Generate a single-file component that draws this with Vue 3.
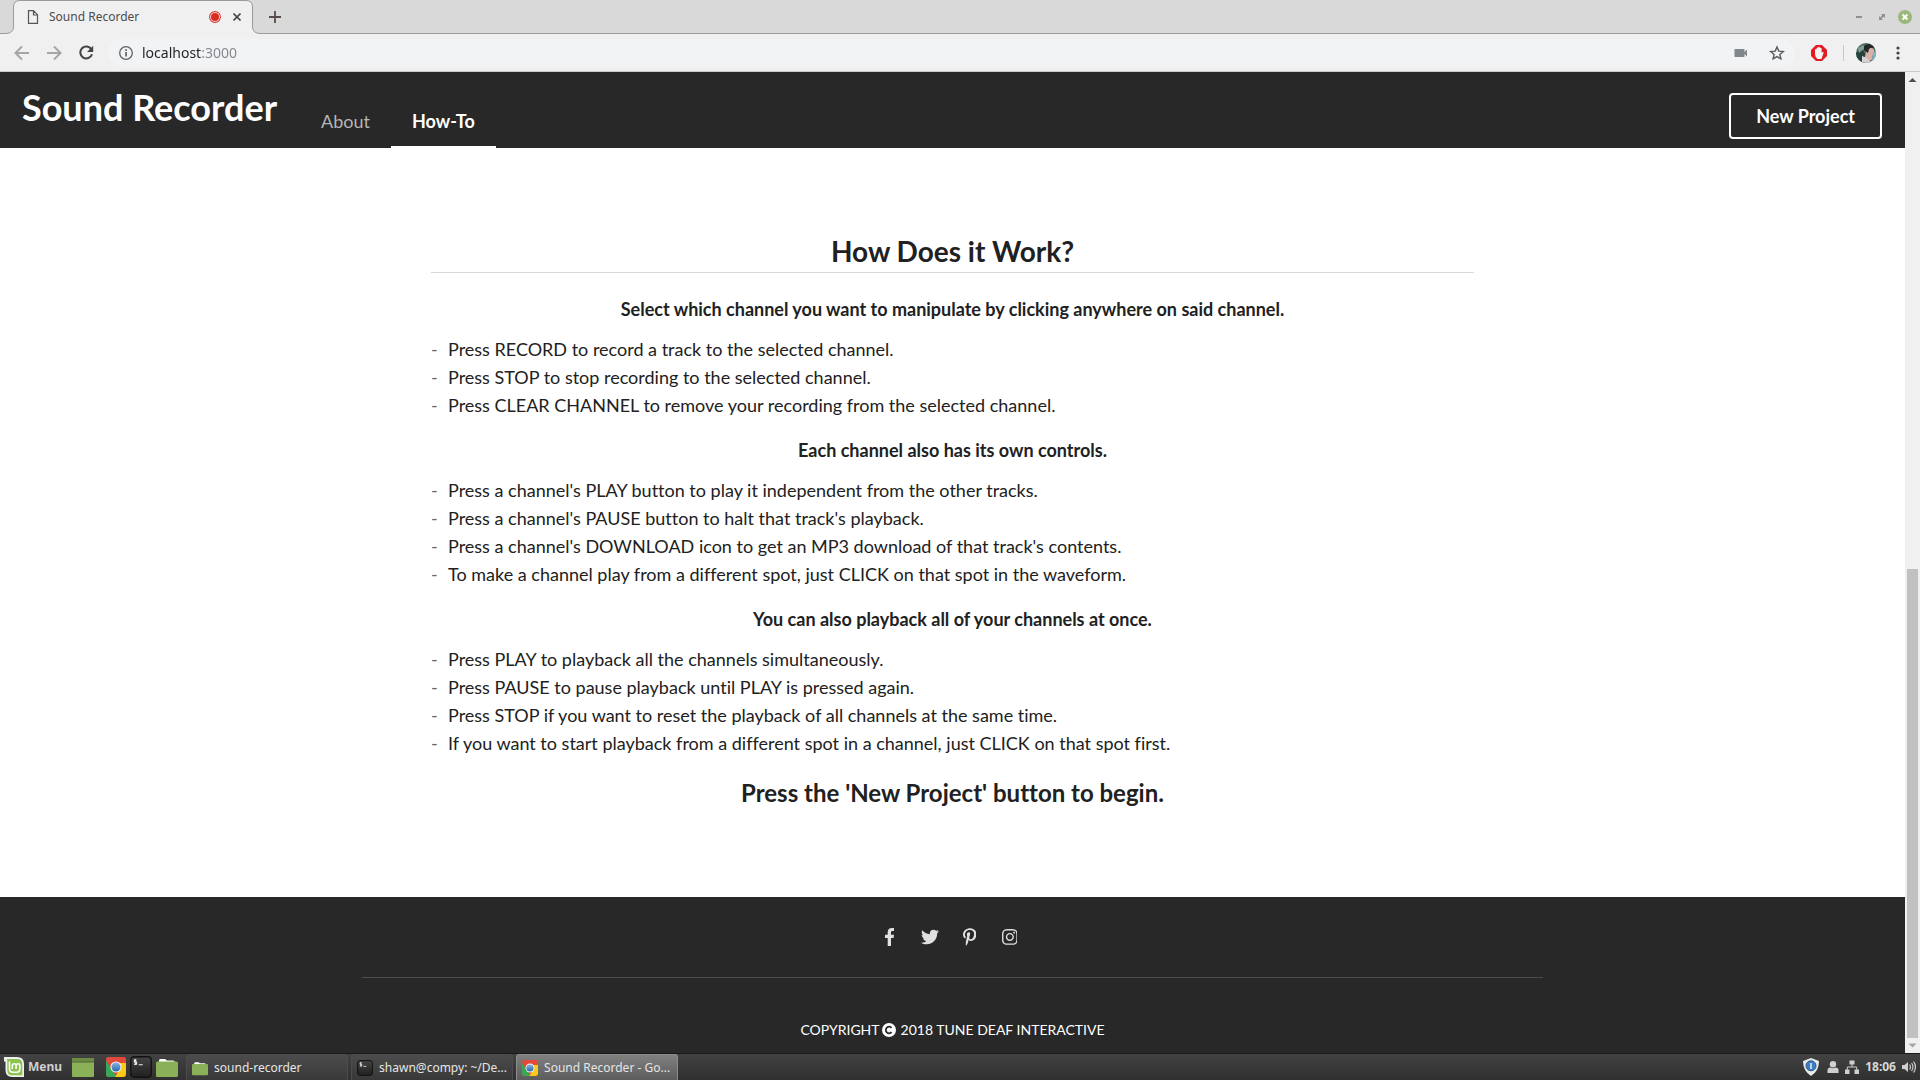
<script setup>
const sections = [
  {
    title: 'Select which channel you want to manipulate by clicking anywhere on said channel.',
    items: [
      'Press RECORD to record a track to the selected channel.',
      'Press STOP to stop recording to the selected channel.',
      'Press CLEAR CHANNEL to remove your recording from the selected channel.',
    ],
  },
  {
    title: 'Each channel also has its own controls.',
    items: [
      "Press a channel's PLAY button to play it independent from the other tracks.",
      "Press a channel's PAUSE button to halt that track's playback.",
      "Press a channel's DOWNLOAD icon to get an MP3 download of that track's contents.",
      'To make a channel play from a different spot, just CLICK on that spot in the waveform.',
    ],
  },
  {
    title: 'You can also playback all of your channels at once.',
    items: [
      'Press PLAY to playback all the channels simultaneously.',
      'Press PAUSE to pause playback until PLAY is pressed again.',
      'Press STOP if you want to reset the playback of all channels at the same time.',
      'If you want to start playback from a different spot in a channel, just CLICK on that spot first.',
    ],
  },
]

const socials = [
  {
    name: 'Facebook',
    box: '0 0 264 512',
    path: 'M76.7 512V283H0v-91h76.7v-71.7C76.7 42.4 124.3 0 193.8 0c33.3 0 61.9 2.5 70.2 3.6V85h-48.2c-37.8 0-45.1 18-45.1 44.3V192H256l-11.7 91h-73.6v229',
  },
  {
    name: 'Twitter',
    box: '0 0 512 512',
    path: 'M459.37 151.716c.325 4.548.325 9.097.325 13.645 0 138.72-105.583 298.558-298.558 298.558-59.452 0-114.68-17.219-161.137-47.106 8.447.974 16.568 1.299 25.34 1.299 49.055 0 94.213-16.568 130.274-44.832-46.132-.975-84.792-31.188-98.112-72.772 6.498.974 12.995 1.624 19.818 1.624 9.421 0 18.843-1.3 27.614-3.573-48.081-9.747-84.143-51.98-84.143-102.985v-1.299c13.969 7.797 30.214 12.67 47.431 13.319-28.264-18.843-46.781-51.005-46.781-87.391 0-19.492 5.197-37.36 14.294-52.954 51.655 63.675 129.3 105.258 216.365 109.807-1.624-7.797-2.599-15.918-2.599-24.04 0-57.828 46.782-104.934 104.934-104.934 30.213 0 57.502 12.67 76.67 33.137 23.715-4.548 46.456-13.32 66.599-25.34-7.798 24.366-24.366 44.833-46.132 57.827 21.117-2.273 41.584-8.122 60.426-16.243-14.292 20.791-32.161 39.308-52.628 54.253z',
  },
  {
    name: 'Pinterest',
    box: '0 0 384 512',
    path: 'M204 6.5C101.4 6.5 0 74.9 0 185.6 0 256 39.6 296 63.6 296c9.9 0 15.6-27.6 15.6-35.4 0-9.3-23.7-29.1-23.7-67.8 0-80.4 61.2-137.4 140.4-137.4 68.1 0 118.5 38.7 118.5 109.8 0 53.1-21.3 152.7-90.3 152.7-24.9 0-46.2-18-46.2-43.8 0-37.8 26.4-74.4 26.4-113.4 0-66.2-93.9-54.2-93.9 25.8 0 16.8 2.1 35.4 9.6 50.7-13.8 59.4-42 147.9-42 209.1 0 18.9 2.7 37.5 4.5 56.4 3.4 3.8 1.7 3.4 6.9 1.5 50.4-69 48.6-82.5 71.4-172.8 12.3 23.4 44.1 36 69.3 36 106.2 0 153.9-103.5 153.9-196.8C384 71.3 298.2 6.5 204 6.5z',
  },
  {
    name: 'Instagram',
    box: '0 0 448 512',
    path: 'M224.1 141c-63.6 0-114.9 51.3-114.9 114.9s51.3 114.9 114.9 114.9S339 319.5 339 255.9 287.7 141 224.1 141zm0 189.6c-41.1 0-74.7-33.5-74.7-74.7s33.5-74.7 74.7-74.7 74.7 33.5 74.7 74.7-33.6 74.7-74.7 74.7zm146.4-194.3c0 14.9-12 26.8-26.8 26.8-14.9 0-26.8-12-26.8-26.8s12-26.8 26.8-26.8 26.8 12 26.8 26.8zm76.1 27.2c-1.7-35.9-9.9-67.7-36.2-93.9-26.2-26.2-58-34.4-93.9-36.2-37-2.1-147.9-2.1-184.9 0-35.8 1.7-67.6 9.9-93.9 36.1s-34.4 58-36.2 93.9c-2.1 37-2.1 147.9 0 184.9 1.7 35.9 9.9 67.7 36.2 93.9s58 34.4 93.9 36.2c37 2.1 147.9 2.1 184.9 0 35.9-1.7 67.7-9.9 93.9-36.2 26.2-26.2 34.4-58 36.2-93.9 2.1-37 2.1-147.8 0-184.8zM398.8 388c-7.8 19.6-22.9 34.7-42.6 42.6-29.5 11.7-99.5 9-132.1 9s-102.7 2.6-132.1-9c-19.6-7.8-34.7-22.9-42.6-42.6-11.7-29.5-9-99.5-9-132.1s-2.6-102.7 9-132.1c7.8-19.6 22.9-34.7 42.6-42.6 29.5-11.7 99.5-9 132.1-9s102.7-2.6 132.1 9c19.6 7.8 34.7 22.9 42.6 42.6 11.7 29.5 9 99.5 9 132.1s2.7 102.7-9 132.1z',
  },
]

const tasks = [
  { icon: 'folder', label: 'sound-recorder', active: false },
  { icon: 'terminal', label: 'shawn@compy: ~/De...', active: false },
  { icon: 'chrome', label: 'Sound Recorder - Go...', active: true },
]
</script>

<template>
  <div class="desktop">
    <svg class="defs" width="0" height="0" aria-hidden="true">
      <defs>
        <linearGradient id="blueball" x1="0" y1="0" x2="0" y2="1">
          <stop offset="0" stop-color="#86b4e0" />
          <stop offset="1" stop-color="#2a68b0" />
        </linearGradient>
        <linearGradient id="termfill" x1="0" y1="0" x2="0" y2="1">
          <stop offset="0" stop-color="#444" />
          <stop offset="1" stop-color="#202020" />
        </linearGradient>
        <clipPath id="tile"><rect width="20" height="20" rx="3" /></clipPath>
        <clipPath id="face"><circle cx="10" cy="10" r="10" /></clipPath>
        <symbol id="chrome" viewBox="0 0 20 20">
          <g clip-path="url(#tile)">
            <rect width="20" height="20" fill="#dc4437" />
            <path d="M0 3L6 13l5 7H0z" fill="#3aa757" />
            <path d="M10 6h10v14H9l5-8z" fill="#fbc916" />
            <path d="M0 0h20v6H10L5 10 0 3z" fill="#e2493b" />
          </g>
          <circle cx="10" cy="10" r="5.6" fill="#f4f4f4" />
          <circle cx="10" cy="10" r="4.5" fill="url(#blueball)" />
        </symbol>
        <symbol id="terminal" viewBox="0 0 20 20">
          <rect x="0.7" y="0.7" width="18.6" height="18.6" rx="3" fill="url(#termfill)" stroke="#111" stroke-width="1.2" />
          <path d="M6 3.6H4v1.9h2v2H3.6M4.8 2.8v5.4M8 8h3.6" fill="none" stroke="#eee" stroke-width="1" />
        </symbol>
        <symbol id="folder" viewBox="0 0 22 20">
          <path d="M3 6V3.500q0-1.500 1.500-1.500H9l2 1.500h6q2 0 2 2V8H3z" fill="#fff" />
          <rect y="4.500" width="22" height="15.500" rx="1.500" fill="#8bb158" />
        </symbol>
      </defs>
    </svg>

    <header class="browser">
      <div class="tabstrip">
        <div class="tab">
          <svg class="tab-shape" width="260" height="34" viewBox="0 0 260 34" aria-hidden="true">
            <path d="M0 34V33.500H6Q13.500 33 13.500 27V7Q13.500 0.500 20 0.500H246Q252.500 0.500 252.500 7V27Q253 33.500 260 33.500V34z" fill="#f0f0f0" />
            <path d="M0 33.500H6Q13.500 33 13.500 27V7Q13.500 0.500 20 0.500H246Q252.500 0.500 252.500 7V27Q253 33.500 260 33.500" fill="none" stroke="#9b9b9b" />
          </svg>
          <svg class="tab-page" width="12" height="14" viewBox="0 0 12 14" fill="none" stroke="#555" aria-hidden="true">
            <path d="M1.500 0.700H6.500L10.500 4.700V13.300H1.500zM6.500 1V5H10.500" stroke-width="1.200" />
          </svg>
          <span class="tab-title">Sound Recorder</span>
          <svg width="12" height="12" viewBox="0 0 12 12" aria-label="Recording">
            <circle cx="6" cy="6" r="5.400" fill="none" stroke="#dc3a2f" stroke-width="1.100" />
            <circle cx="6" cy="6" r="4" fill="#d92d23" />
          </svg>
          <button class="icon-btn" aria-label="Close tab">
            <svg width="8" height="8" viewBox="0 0 8 8" stroke="#4a4a4a" stroke-width="1.600"><path d="M0.500 0.500l7 7M7.500 0.500l-7 7" /></svg>
          </button>
        </div>
        <button class="icon-btn new-tab" aria-label="New tab">
          <svg width="12" height="12" viewBox="0 0 12 12" stroke="#5a4a4a" stroke-width="1.800"><path d="M6 0v12M0 6h12" /></svg>
        </button>
        <div class="window-controls">
          <button class="icon-btn" aria-label="Minimize">
            <svg width="14" height="14" viewBox="0 0 14 14"><path d="M4 6h6v2H4z" fill="#8d9096" /></svg>
          </button>
          <button class="icon-btn" aria-label="Restore">
            <svg width="14" height="14" viewBox="0 0 14 14" fill="#8d9096"><path d="M6 4h4v4L8.700 6.700 7.500 7.800 6.200 6.500 7.300 5.300zM8 10H4V6l1.300 1.300L6 6.600l1.400 1.400-.700.700z" /></svg>
          </button>
          <button class="icon-btn" aria-label="Close window">
            <svg width="14" height="14" viewBox="0 0 14 14"><circle cx="7" cy="7" r="7" fill="#9ab87c" /><path d="M4.500 4.500l5 5M9.500 4.500l-5 5" stroke="#fff" stroke-width="1.900" /></svg>
          </button>
        </div>
      </div>

      <div class="toolbar">
        <div class="history">
          <button class="icon-btn" aria-label="Back">
            <svg width="16" height="16" viewBox="0 0 16 16" fill="none" stroke="#a5a5a5" stroke-width="2"><path d="M15 8H2M8 1.500L1.500 8 8 14.500" /></svg>
          </button>
          <button class="icon-btn" aria-label="Forward">
            <svg width="16" height="16" viewBox="0 0 16 16" fill="none" stroke="#a5a5a5" stroke-width="2"><path d="M1 8h13M8 1.500L14.500 8 8 14.500" /></svg>
          </button>
          <button class="icon-btn" aria-label="Reload">
            <svg width="16" height="16" viewBox="0 0 16 16"><path d="M13.400 4.300A6 6 0 1 0 14 9.300" fill="none" stroke="#444" stroke-width="2.100" /><path d="M15.200 0.800V7H9z" fill="#444" /></svg>
          </button>
        </div>
        <div class="omnibox">
          <svg width="16" height="16" viewBox="0 0 16 16" aria-hidden="true"><circle cx="8" cy="8" r="6.300" fill="none" stroke="#5f6368" stroke-width="1.300" /><path d="M7.200 7h1.700v4.500H7.200zM7.200 4.300h1.700V6H7.200z" fill="#5f6368" /></svg>
          <input class="url" type="text" value="localhost:3000" aria-label="Address" />
          <svg width="14" height="10" viewBox="0 0 14 10" aria-label="Camera"><path d="M1 1h9q.500 0 .500.500V4L13 1.500v7L10.500 6v2.500q0 .500-.500.500H1q-.500 0-.500-.500v-7Q.500 1 1 1z" fill="#80868b" /></svg>
          <button class="icon-btn" aria-label="Bookmark">
            <svg width="16" height="16" viewBox="0 0 16 16"><path d="M8 2l1.800 4.100 4.500.400-3.400 3 1 4.400L8 11.600l-3.900 2.300 1-4.400-3.400-3 4.500-.400z" fill="none" stroke="#555a60" stroke-width="1.400" /></svg>
          </button>
        </div>
        <div class="extensions">
          <button class="icon-btn" aria-label="Ad blocker">
            <svg width="16" height="16" viewBox="0 0 16 16"><path d="M5 0h6l5 5v6l-5 5H5l-5-5V5z" fill="#e21b22" /><path d="M4 9V4.500q.800-1 1.600 0V3q.800-1.200 1.600 0V2.300q.900-1 1.700 0V3q1-.800 1.700.300V8l1.200-1.300q1.200.200.700 1.300L10.500 14h-4Q4 12.500 4 9z" fill="#f4f4f4" /></svg>
          </button>
          <span class="divider"></span>
          <button class="icon-btn" aria-label="Profile">
            <svg width="20" height="20" viewBox="0 0 20 20">
              <g clip-path="url(#face)">
                <rect width="20" height="20" fill="#4c6a63" />
                <path d="M0 10L6 6l5 8v6H0z" fill="#24433c" />
                <path d="M2 5l5-3 2 3-6 5z" fill="#7fa093" />
                <path d="M11 6q5-3 7 1l1 4-3 2 .500 3-4 3-4-4z" fill="#d8b3a5" />
                <path d="M8 3q5-4 10 0l1 2q-4-1-6 1l-1 4-4-3z" fill="#262529" />
                <path d="M6 13l5 2 4 5H6z" fill="#d6d2d6" />
                <path d="M17 9h3v9h-4z" fill="#83b5c4" />
              </g>
            </svg>
          </button>
          <button class="icon-btn" aria-label="Menu">
            <svg width="4" height="14" viewBox="0 0 4 14" fill="#444"><circle cx="2" cy="2" r="1.600" /><circle cx="2" cy="7" r="1.600" /><circle cx="2" cy="12" r="1.600" /></svg>
          </button>
        </div>
      </div>
    </header>

    <div class="viewport">
      <div class="page">
        <nav class="navbar">
          <h1 class="brand">Sound Recorder</h1>
          <a class="nav-link" href="#about">About</a>
          <a class="nav-link current" href="#how-to">How-To</a>
          <button class="new-project">New Project</button>
        </nav>

        <main class="how">
          <h2 class="how-title">How Does it Work?</h2>
          <section v-for="section in sections" :key="section.title">
            <h3 class="how-heading">{{ section.title }}</h3>
            <ul class="how-list">
              <li v-for="item in section.items" :key="item">{{ item }}</li>
            </ul>
          </section>
          <p class="how-end">Press the 'New Project' button to begin.</p>
        </main>

        <footer class="footer">
          <div class="footer-inner">
            <div class="socials">
              <a v-for="s in socials" :key="s.name" href="#" :aria-label="s.name">
                <svg height="18" :viewBox="s.box" fill="#e0e0e0"><path :d="s.path" /></svg>
              </a>
            </div>
            <p class="copyright">
              <span>COPYRIGHT</span>
              <svg width="14" height="14" viewBox="0 0 14 14" aria-hidden="true"><circle cx="7" cy="7" r="7" fill="#fff" /><path d="M9.600 9.200A3.300 3.300 0 1 1 9.600 4.800" fill="none" stroke="#282828" stroke-width="1.800" /></svg>
              <span>2018 TUNE DEAF INTERACTIVE</span>
            </p>
          </div>
        </footer>
      </div>

      <div class="scrollbar" aria-hidden="true">
        <svg width="15" height="17" viewBox="0 0 15 17"><path d="M7.500 6l4 4h-8z" fill="#505050" /></svg>
        <div class="before"></div>
        <div class="thumb"></div>
        <svg width="15" height="15" viewBox="0 0 15 15"><path d="M7.500 9.500l4-4h-8z" fill="#a3a3a3" /></svg>
      </div>
    </div>

    <div class="taskbar">
      <button class="menu">
        <svg width="20" height="20" viewBox="0 0 20 20" aria-hidden="true">
          <path d="M0 0H13Q20 0 20 7V20H8Q1.500 20 1.500 13V4.500H0z" fill="#f0f0ee" />
          <path d="M3 2H13Q18.300 2 18.300 7V18.300H8Q3.300 18.300 3.300 13V4z" fill="#8bc34f" />
          <path d="M5.500 4.500V12q0 3.300 3.300 3.300h4q3 0 3-3V8.700q0-2-1.800-2t-1.900 2V12M12.100 8.700q0-2-1.900-2t-1.900 2V12" fill="none" stroke="#fff" stroke-width="1.600" />
        </svg>
        <span>Menu</span>
      </button>
      <div class="launchers">
        <button class="icon-btn desktop-btn" aria-label="Show desktop">
          <svg width="22" height="20" viewBox="0 0 22 20"><rect y="1" width="22" height="19" rx="1" fill="#8bb158" /><path d="M0 5V2q0-1 1-1h20q1 0 1 1v3z" fill="#6c8c43" /><path d="M0 5h22" stroke="#4d6631" /></svg>
        </button>
        <button class="icon-btn" aria-label="Chrome"><svg width="20" height="20"><use href="#chrome" /></svg></button>
        <button class="icon-btn" aria-label="Terminal"><svg width="22" height="22"><use href="#terminal" /></svg></button>
        <button class="icon-btn" aria-label="Files"><svg width="22" height="20"><use href="#folder" /></svg></button>
      </div>
      <div class="tasks">
        <button v-for="t in tasks" :key="t.label" class="task" :class="{ active: t.active }">
          <svg width="16" height="16" aria-hidden="true"><use :href="'#' + t.icon" /></svg>
          <span>{{ t.label }}</span>
        </button>
      </div>
      <div class="tray">
        <svg class="shield" width="16" height="18" viewBox="0 0 16 18"><path d="M8 0l8 3q0 10-8 15Q0 13 0 3z" fill="#e9e9e9" /><circle cx="8" cy="7.800" r="5" fill="#3f7cc4" stroke="#28588f" /><path d="M8 5v6" stroke="#dbe8f6" stroke-width="1.600" /></svg>
        <svg width="12" height="12" viewBox="0 0 12 12" fill="#cfcfcf"><circle cx="6" cy="3.200" r="3.200" /><path d="M0.500 12V9q0-2.500 3-2.500Q6 8 8.500 6.500q3 0 3 2.500v3z" /></svg>
        <svg width="14" height="14" viewBox="0 0 14 14" fill="#cfcfcf"><path d="M4.500 0.500h5v4h-5zM0 9.500h4.500V14H0zM9.500 9.500H14V14H9.500z" /><path d="M7 4v3M2.300 10V7h9.400v3" fill="none" stroke="#cfcfcf" /></svg>
        <time class="clock">18:06</time>
        <svg width="14" height="12" viewBox="0 0 14 12" fill="#cfcfcf"><path d="M0 4h2.500L6 1v10L2.500 8H0z" /><path d="M7.500 3.500q2 2.500 0 5M9.500 2q3 4 0 8M11.500 0.500q4 5.500 0 11" fill="none" stroke="#cfcfcf" stroke-width="1.200" /></svg>
      </div>
    </div>
  </div>
</template>

<style>
body {
  margin: 0;
  background: #282828;
}
</style>

<style scoped>
* {
  box-sizing: border-box;
}
.desktop {
  display: flex;
  flex-direction: column;
  min-height: 100vh;
  font-family: Lato, "Liberation Sans", sans-serif;
  font-variant-ligatures: no-common-ligatures;
  color: #212121;
}
.defs {
  position: absolute;
}
svg {
  display: block;
  flex: none;
}
button {
  border: 0;
  padding: 0;
  background: none;
  font: inherit;
  color: inherit;
  cursor: pointer;
}
.icon-btn {
  display: flex;
  align-items: center;
  justify-content: center;
  flex: none;
}

/* browser chrome */
.browser {
  font-family: "Noto Sans", sans-serif;
  background: #f0f0f0;
}
.tabstrip {
  display: flex;
  align-items: center;
  height: 34px;
  background: #d9d9d9;
  border-bottom: 1px solid #9b9b9b;
}
.tab {
  position: relative;
  display: flex;
  align-items: center;
  width: 260px;
  height: 34px;
  margin-bottom: -1px;
  padding: 0 19px 0 27px;
}
.tab > * {
  position: relative;
}
.tab > .tab-shape {
  position: absolute;
  left: 0;
  top: 0;
}
.tab-title {
  flex: 1;
  margin-left: 10px;
  font-size: 12px;
  line-height: 16px;
  color: #4c4c4c;
}
.tab .icon-btn {
  margin-left: 12px;
}
.new-tab {
  margin-left: 9px;
}
.window-controls {
  display: flex;
  gap: 9px;
  margin-left: auto;
  margin-right: 8px;
}
.toolbar {
  display: flex;
  align-items: center;
  height: 38px;
  border-bottom: 1px solid #cacaca;
}
.history {
  display: flex;
  gap: 16px;
  margin: 0 14px;
}
.omnibox {
  display: flex;
  align-items: center;
  flex: 1;
  height: 28px;
  padding: 0 10px;
  border-radius: 14px;
  background: #f1f3f4;
}
.url {
  flex: 1;
  min-width: 0;
  margin-left: 8px;
  padding: 0;
  border: 0;
  outline: 0;
  font-family: "Noto Sans", sans-serif;
  font-size: 14px;
  line-height: 20px;
  background: linear-gradient(90deg, #202124 60px, #80868b 60px);
  background-clip: text;
  -webkit-text-fill-color: transparent;
}
.omnibox .icon-btn {
  margin-left: 21px;
}
.extensions {
  display: flex;
  align-items: center;
  margin: 0 20px 0 16px;
}
.divider {
  width: 1px;
  height: 16px;
  margin: 0 12px 0 16px;
  background: #c8c8c8;
}
.extensions .icon-btn:last-child {
  margin-left: 20px;
}

/* web page */
.viewport {
  display: flex;
  flex: 1;
}
.page {
  display: flex;
  flex-direction: column;
  flex: 1;
  background: #fff;
}
.navbar {
  display: flex;
  align-items: flex-end;
  height: 76px;
  padding: 0 23px 0 22px;
  background: #282828;
  color: #fff;
}
.brand {
  align-self: center;
  margin: 0 23px 6px 0;
  font-size: 36px;
  line-height: 40px;
  font-weight: 700;
}
.nav-link {
  padding: 0 21px 13px;
  border-bottom: 2px solid transparent;
  font-size: 18px;
  line-height: 24px;
  color: #b5b5b5;
  text-decoration: none;
}
.nav-link.current {
  border-color: #fff;
  font-weight: 700;
  color: #fff;
}
.new-project {
  align-self: center;
  margin: 12px 0 0 auto;
  height: 46px;
  padding: 0 25px;
  border: 2px solid #fff;
  border-radius: 4px;
  font-size: 18px;
  font-weight: 700;
}
.how {
  flex: 1;
  width: 1043px;
  max-width: 100%;
  margin: 0 auto;
  padding: 83px 0 88px;
}
.how-title {
  margin: 0;
  padding-bottom: 1px;
  border-bottom: 1px solid #d9d9d9;
  font-size: 28px;
  line-height: 40px;
  text-align: center;
}
.how-heading {
  margin: 0;
  padding: 24px 0 14px;
  font-size: 18px;
  line-height: 24px;
  text-align: center;
}
section + section .how-heading {
  padding-top: 19px;
}
.how-list {
  margin: 0;
  padding: 0;
  list-style: none;
  font-size: 18px;
  line-height: 28px;
}
.how-list li {
  display: flex;
}
.how-list li::before {
  content: "-";
  width: 17px;
  color: #666;
}
.how-end {
  margin: 20px 0 0;
  font-size: 24px;
  line-height: 32px;
  font-weight: 700;
  text-align: center;
}
.footer {
  background: #282828;
  color: #fff;
}
.footer-inner {
  width: 1181px;
  max-width: 100%;
  margin: 0 auto;
}
.socials {
  display: flex;
  justify-content: center;
  align-items: center;
  height: 81px;
  padding-right: 6px;
  border-bottom: 1px solid #4c4c4c;
}
.socials a {
  display: flex;
  justify-content: center;
  width: 40px;
}
.copyright {
  display: flex;
  align-items: center;
  justify-content: center;
  margin: 0;
  padding: 42px 0 13px;
  font-size: 14px;
  line-height: 20px;
}
.copyright svg {
  margin: 0 5px 0 2px;
}
.scrollbar {
  display: flex;
  flex-direction: column;
  width: 15px;
  background: #f0f0f0;
}
.before {
  flex: 480;
}
.thumb {
  flex: 469;
  margin: 0 2px;
  background: #c1c1c1;
}

/* desktop panel */
.taskbar {
  display: flex;
  align-items: center;
  height: 27px;
  border-top: 1px solid #1a1a1a;
  background: linear-gradient(#424242, #303030);
  font-family: "Noto Sans", sans-serif;
  font-size: 12px;
  line-height: 16px;
  color: #e6e6e6;
}
.menu {
  display: flex;
  align-items: center;
  gap: 4px;
  margin-left: 4px;
  font-weight: 700;
  color: #cfcfcf;
}
.launchers {
  display: flex;
  align-items: center;
  gap: 4px;
  margin-left: 10px;
}
.desktop-btn {
  margin-right: 8px;
}
.tasks {
  display: flex;
  align-self: stretch;
  gap: 3px;
  margin-left: 8px;
}
.task {
  display: flex;
  align-items: center;
  gap: 6px;
  width: 162px;
  padding: 0 5px;
  border: 1px solid #4c4c4c;
  border-bottom: 0;
  border-radius: 3px 3px 0 0;
  background: linear-gradient(#4c4c4c, #383838);
  white-space: nowrap;
}
.task.active {
  border-color: #8c8c8c;
  background: linear-gradient(#808080, #5c5c5c);
}
.tray {
  display: flex;
  align-items: center;
  gap: 6px;
  margin: 0 4px 0 auto;
}
.shield {
  margin-right: 2px;
}
.clock {
  font-weight: 700;
  color: #d8d8d8;
}
</style>
